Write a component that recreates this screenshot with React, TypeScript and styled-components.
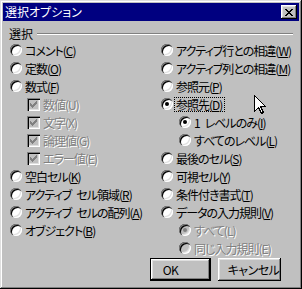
import styled, { createGlobalStyle } from 'styled-components';

const GlobalStyle = createGlobalStyle`
	html, body {
		margin: 0;
		padding: 0;
		background: #c0c0c0;
	}
	body {
		font-family: "Noto Sans CJK JP", "Liberation Sans", sans-serif;
		font-size: 12px;
		-webkit-font-smoothing: none;
	}
`;

type Item =
	| { kind: 'radio'; label: string; key: string; indent?: boolean; checked?: boolean; disabled?: boolean; focus?: boolean }
	| { kind: 'check'; label: string; key: string };

// en space keeps the gap visible with the tight letter-spacing
const leftItems: Item[] = [
	{ kind: 'radio', label: 'コメント', key: 'C' },
	{ kind: 'radio', label: '定数', key: 'O' },
	{ kind: 'radio', label: '数式', key: 'F' },
	{ kind: 'check', label: '数値', key: 'U' },
	{ kind: 'check', label: '文字', key: 'X' },
	{ kind: 'check', label: '論理値', key: 'G' },
	{ kind: 'check', label: 'エラー値', key: 'E' },
	{ kind: 'radio', label: '空白セル', key: 'K' },
	{ kind: 'radio', label: 'アクティブ\u2002セル領域', key: 'R' },
	{ kind: 'radio', label: 'アクティブ\u2002セルの配列', key: 'A' },
	{ kind: 'radio', label: 'オブジェクト', key: 'B' },
];

const rightItems: Item[] = [
	{ kind: 'radio', label: 'アクティブ行との相違', key: 'W' },
	{ kind: 'radio', label: 'アクティブ列との相違', key: 'M' },
	{ kind: 'radio', label: '参照元', key: 'P' },
	{ kind: 'radio', label: '参照先', key: 'D', checked: true, focus: true },
	{ kind: 'radio', label: '1\u2002レベルのみ', key: 'I', indent: true, checked: true },
	{ kind: 'radio', label: 'すべてのレベル', key: 'L', indent: true },
	{ kind: 'radio', label: '最後のセル', key: 'S' },
	{ kind: 'radio', label: '可視セル', key: 'Y' },
	{ kind: 'radio', label: '条件付き書式', key: 'T' },
	{ kind: 'radio', label: 'データの入力規則', key: 'V' },
	{ kind: 'radio', label: 'すべて', key: 'L', indent: true, checked: true, disabled: true },
	{ kind: 'radio', label: '同じ入力規則', key: 'E', indent: true, disabled: true },
];

const CheckGlyph = () => (
	<svg width="7" height="7" viewBox="0 0 7 7" shapeRendering="crispEdges">
		<path
			fill="#808080"
			d="M6 0h1v1h-1zM5 1h2v1h-2zM0 2h1v1h-1zM4 2h3v1h-3zM0 3h2v1h-2zM3 3h3v1h-3zM0 4h5v1h-5zM1 5h3v1h-3zM2 6h1v1h-1z"
		/>
	</svg>
);

const CloseGlyph = () => (
	<svg width="8" height="7" viewBox="0 0 8 7" shapeRendering="crispEdges">
		<path
			fill="#000"
			d="M0 0h2v1h-2zM6 0h2v1h-2zM1 1h2v1h-2zM5 1h2v1h-2zM2 2h4v1h-4zM3 3h2v1h-2zM2 4h4v1h-4zM1 5h2v1h-2zM5 5h2v1h-2zM0 6h2v1h-2zM6 6h2v1h-2z"
		/>
	</svg>
);

const Cursor = () => (
	<svg width="12" height="20" viewBox="0 0 12 20" shapeRendering="crispEdges">
		<path
			d="M0.5 0.5 L0.5 16.5 L4.5 12.5 L7.5 18.5 L9.5 17.5 L6.5 11.5 L11.5 11.5 Z"
			fill="#fff"
			stroke="#000"
			strokeWidth="1"
		/>
	</svg>
);

const Entry = ({ item }: { item: Item }) => {
	if (item.kind === 'check') {
		return (
			<Row $indent={17}>
				<CheckBox>
					<CheckGlyph />
				</CheckBox>
				<Label $disabled>
					{item.label}({item.key})
				</Label>
			</Row>
		);
	}
	return (
		<Row $indent={item.indent ? 18 : 0}>
			<Radio $checked={item.checked} $disabled={item.disabled} />
			<Label $disabled={item.disabled} $focus={item.focus}>
				{item.label}({item.disabled ? item.key : <u>{item.key}</u>})
			</Label>
		</Row>
	);
};

export default function App() {
	return (
		<>
			<GlobalStyle />
			<Window>
				<TitleBar>
					<Title>選択オプション</Title>
					<CloseButton>
						<CloseGlyph />
					</CloseButton>
				</TitleBar>
				<GroupHeader>
					<GroupLabel>選択</GroupLabel>
					<GroupLine />
				</GroupHeader>
				<Columns>
					<Column>
						{leftItems.map((it, i) => (
							<Entry key={i} item={it} />
						))}
					</Column>
					<Column>
						{rightItems.map((it, i) => (
							<Entry key={i} item={it} />
						))}
					</Column>
				</Columns>
				<ButtonRow>
					<Button $default $width={61}>
						OK
					</Button>
					<Button $width={63}>キャンセル</Button>
				</ButtonRow>
				<Pointer>
					<Cursor />
				</Pointer>
			</Window>
		</>
	);
}

const Window = styled.div`
	position: relative;
	box-sizing: border-box;
	width: 302px;
	height: 289px;
	padding: 3px;
	background: #c0c0c0;
	box-shadow: inset -1px -1px 0 #000, inset 1px 1px 0 #dfdfdf, inset -2px -2px 0 #808080,
		inset 2px 2px 0 #fff;
	display: flex;
	flex-direction: column;
	overflow: hidden;
`;

const TitleBar = styled.div`
	height: 18px;
	background: #000080;
	display: flex;
	align-items: center;
	justify-content: space-between;
	padding: 0 2px 0 2px;
`;

const Title = styled.span`
	color: #fff;
	font-size: 12px;
	line-height: 14px;
	font-feature-settings: 'palt';
`;

const CloseButton = styled.div`
	box-sizing: border-box;
	width: 16px;
	height: 14px;
	background: #c0c0c0;
	display: flex;
	align-items: center;
	justify-content: center;
	box-shadow: inset -1px -1px 0 #000, inset 1px 1px 0 #fff, inset -2px -2px 0 #808080,
		inset 2px 2px 0 #dfdfdf;
`;

const GroupHeader = styled.div`
	margin-top: 6px;
	height: 14px;
	display: flex;
	align-items: center;
	gap: 4px;
	padding: 0 6px 0 6px;
`;

const GroupLabel = styled.span`
	line-height: 14px;
	color: #000;
`;

const GroupLine = styled.div`
	flex: 1;
	border-top: 1px solid #808080;
	border-bottom: 1px solid #fff;
`;

const Columns = styled.div`
	display: grid;
	grid-template-columns: 151px 1fr;
	padding-left: 7px;
`;

const Column = styled.div`
	display: flex;
	flex-direction: column;
`;

const Row = styled.div<{ $indent: number }>`
	height: 18px;
	display: flex;
	align-items: center;
	gap: 3px;
	padding-left: ${(p) => p.$indent}px;
	white-space: nowrap;
`;

const Radio = styled.span<{ $checked?: boolean; $disabled?: boolean }>`
	position: relative;
	flex: none;
	width: 12px;
	height: 12px;
	border-radius: 50%;
	background: ${(p) => (p.$disabled ? '#c0c0c0' : '#fff')};
	box-shadow: inset 1px 1px 0 #808080, inset 2px 2px 0 #000, inset -1px -1px 0 #fff,
		inset -2px -2px 0 #dfdfdf;

	&::after {
		content: '';
		display: ${(p) => (p.$checked ? 'block' : 'none')};
		position: absolute;
		left: 4px;
		top: 4px;
		width: 4px;
		height: 4px;
		border-radius: 50%;
		background: ${(p) => (p.$disabled ? '#808080' : '#000')};
	}
`;

const CheckBox = styled.span`
	flex: none;
	box-sizing: border-box;
	width: 13px;
	height: 13px;
	padding: 3px;
	display: flex;
	background: #c0c0c0;
	box-shadow: inset 1px 1px 0 #808080, inset 2px 2px 0 #000, inset -1px -1px 0 #fff,
		inset -2px -2px 0 #dfdfdf;
`;

const Label = styled.span<{ $disabled?: boolean; $focus?: boolean }>`
	font-size: 12px;
	line-height: 13px;
	letter-spacing: -1px;
	padding: 0 2px 0 1px;
	margin-left: -1px;
	font-feature-settings: 'palt';
	color: ${(p) => (p.$disabled ? '#808080' : '#000')};
	text-shadow: ${(p) => (p.$disabled ? '1px 1px 0 #fff' : 'none')};
	outline: ${(p) => (p.$focus ? '1px dotted #000' : 'none')};
	outline-offset: 0;
`;

const ButtonRow = styled.div`
	display: flex;
	gap: 7px;
	padding-left: 147px;
	margin-top: 1px;
`;

const Button = styled.div<{ $default?: boolean; $width: number }>`
	box-sizing: border-box;
	width: ${(p) => p.$width}px;
	height: 23px;
	display: flex;
	align-items: center;
	justify-content: center;
	padding: ${(p) => (p.$default ? '0 20px 0 0' : '0 0 0 8px')};
	font-size: 12px;
	letter-spacing: -0.5px;
	font-feature-settings: 'palt';
	color: #000;
	background: #c0c0c0;
	box-shadow: ${(p) =>
		p.$default
			? 'inset 0 0 0 1px #000, inset -2px -2px 0 #000, inset 2px 2px 0 #fff, inset -3px -3px 0 #808080, inset 3px 3px 0 #dfdfdf'
			: 'inset -1px -1px 0 #000, inset 1px 1px 0 #fff, inset -2px -2px 0 #808080, inset 2px 2px 0 #dfdfdf'};
`;

const Pointer = styled.div`
	position: absolute;
	left: 254px;
	top: 95px;
	width: 12px;
	height: 20px;
`;
